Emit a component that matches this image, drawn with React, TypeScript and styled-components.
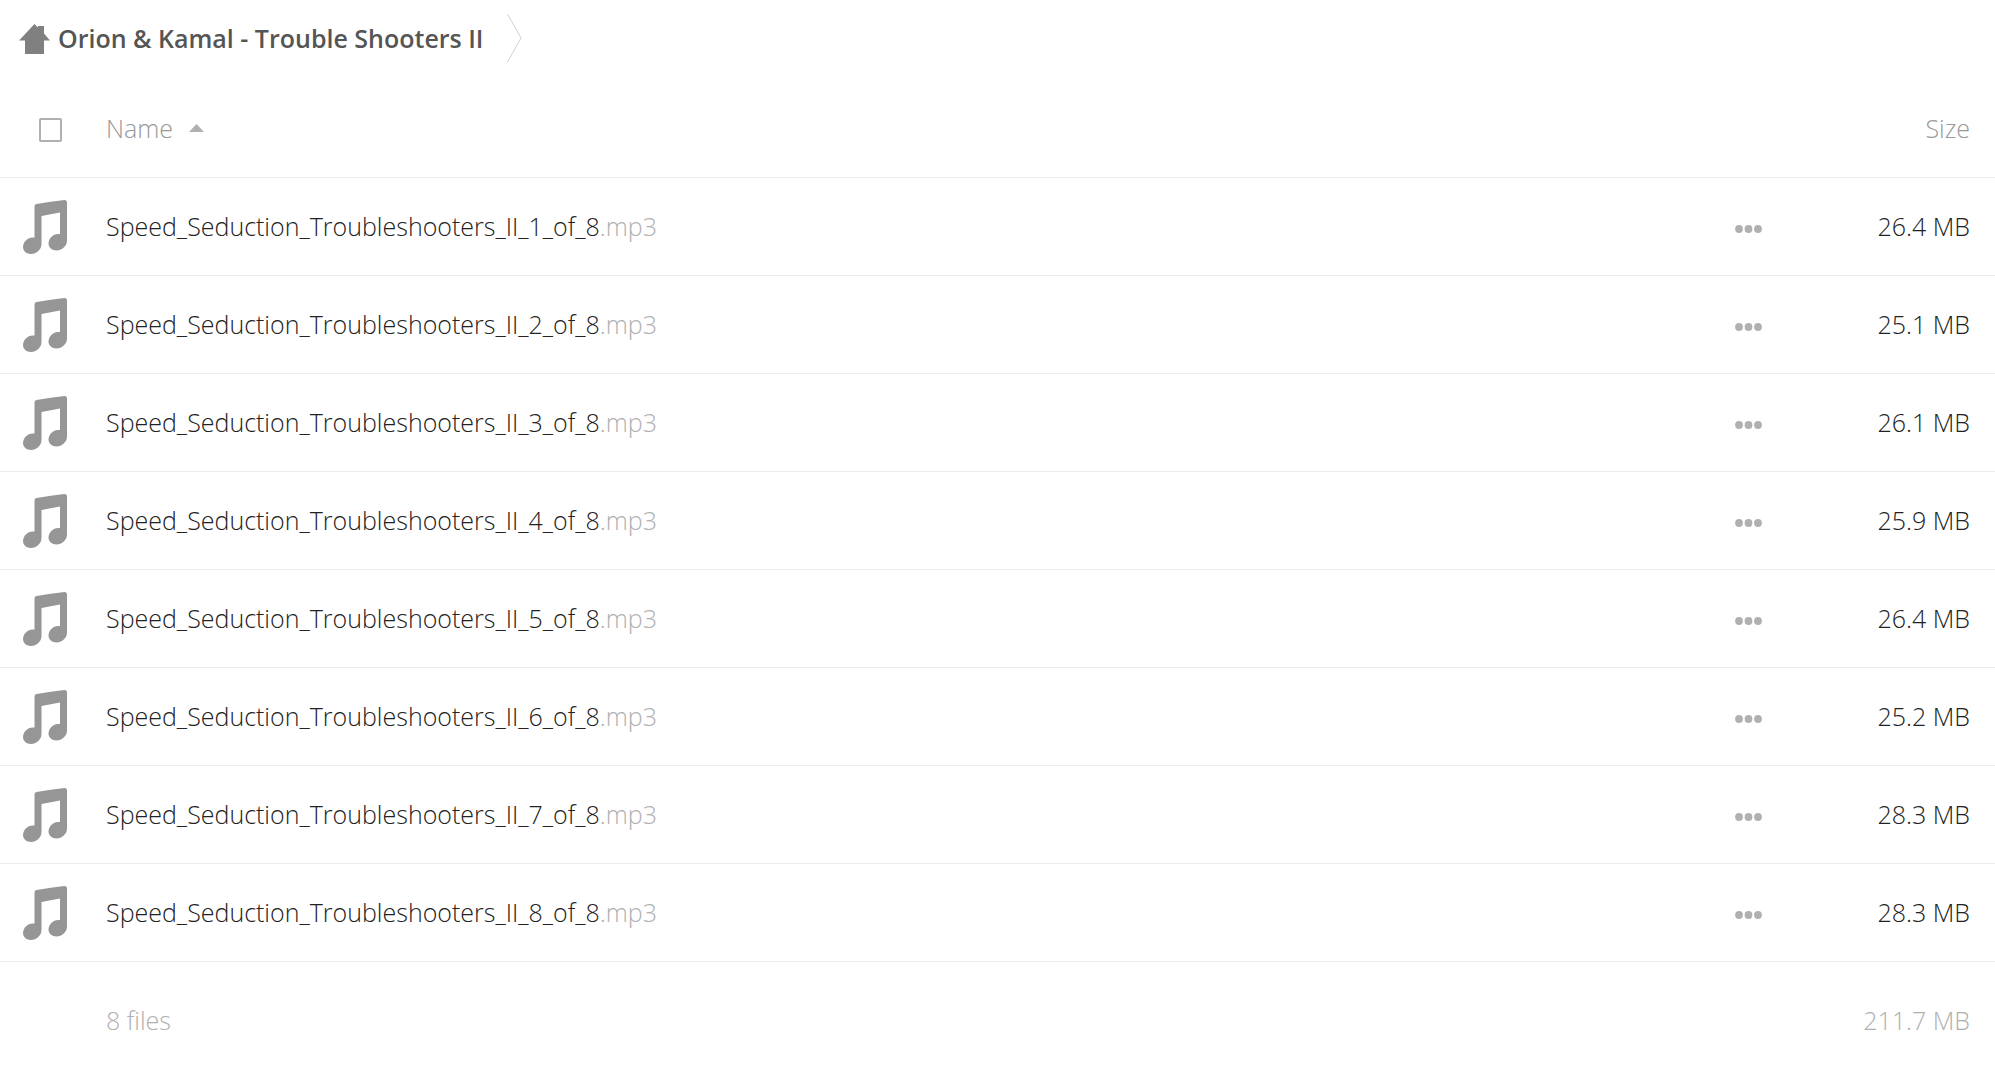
import React from "react";
import styled, { createGlobalStyle } from "styled-components";

const GlobalStyle = createGlobalStyle`
  *, *::before, *::after { box-sizing: border-box; }
  body {
    margin: 0;
    background: #fff;
    color: #222;
    font-family: "Open Sans", "Noto Sans", sans-serif;
    font-size: 25px;
    font-weight: 300;
    line-height: 36px;
  }
`;

const Breadcrumb = styled.nav`
  display: flex;
  align-items: center;
  height: 78px;
  padding: 0 0 0 19px;
`;

const CrumbLink = styled.a`
  display: flex;
  align-items: center;
  gap: 8px;
  color: #555;
  font-weight: 600;
  text-decoration: none;
`;

const CrumbTitle = styled.span`
  padding-bottom: 2px;
`;

const CrumbArrow = styled.svg`
  margin: 0 0 2px 22px;
`;

const FileTable = styled.table`
  width: 100%;
  table-layout: fixed;
  border-collapse: separate;
  border-spacing: 0;
`;

const IconColumn = styled.col`
  width: 106px;
`;

const ActionColumn = styled.col`
  width: 94px;
`;

const SizeColumn = styled.col`
  width: 186px;
`;

const HeadCell = styled.th<{ $align?: "left" | "right" }>`
  height: 100px;
  padding: 0 25px 0 0;
  border-bottom: 1px solid #ebebeb;
  color: #999;
  font-weight: 300;
  text-align: ${(p) => p.$align ?? "left"};
  vertical-align: middle;
`;

const Checkbox = styled.input`
  appearance: none;
  display: block;
  width: 23px;
  height: 24px;
  margin: 4px 0 0 39px;
  border: 2px solid #b0b0b0;
  border-radius: 2px;
  background: #fff;

  &:checked {
    background: #b0b0b0;
  }
`;

const SortButton = styled.button`
  display: inline-flex;
  align-items: center;
  gap: 16px;
  padding: 0;
  border: 0;
  background: none;
  color: inherit;
  font: inherit;
  cursor: pointer;
`;

const Cell = styled.td<{ $align?: "left" | "right" }>`
  height: 98px;
  padding: 0 25px 2px 0;
  border-bottom: 1px solid #ebebeb;
  text-align: ${(p) => p.$align ?? "left"};
  vertical-align: middle;
  white-space: nowrap;
`;

const IconCell = styled(Cell)`
  padding: 0 0 0 23px;
`;

const ActionCell = styled(Cell)`
  padding: 4px 0 0;
`;

const FileLink = styled.a`
  color: inherit;
  text-decoration: none;
`;

const Extension = styled.span`
  color: #b0b0b0;
`;

const MenuButton = styled.button`
  display: flex;
  padding: 10px 20px;
  border: 0;
  background: none;
  cursor: pointer;
`;

const Block = styled.svg`
  display: block;
`;

const SummaryCell = styled.td<{ $align?: "left" | "right" }>`
  height: 107px;
  padding: 8px 25px 0 0;
  color: #b0b0b0;
  text-align: ${(p) => p.$align ?? "left"};
  vertical-align: middle;
`;

const HomeIcon = () => (
  <Block width="31" height="30" viewBox="0 0 31 30" fill="#808080" aria-hidden="true">
    <path d="M15.500 0 19 3.500V2h6v7.500l6 7h-6V30H6V16.500H0z" />
  </Block>
);

const MusicIcon = () => (
  <Block width="44" height="54" viewBox="0 0 44 54" fill="#969696" aria-hidden="true">
    <path d="M13.500 4Q28 1.600 41.500 0 44 0 44 2.500V40.500C44 46 39 50.500 33.500 50.500 29 50.500 25.500 47.600 25.500 43.500 25.500 38.500 30 34 35 34H37V12.500L18.500 16V44C18.500 49.500 13.500 54 8 54 3.500 54 0 51.200 0 47 0 42 4.500 37.500 9.500 37.500H11.500V6.500Q11.500 4.300 13.500 4z" />
  </Block>
);

const DotsIcon = () => (
  <Block width="27" height="8" viewBox="0 0 27 8" fill="#b0b0b0" aria-hidden="true">
    <circle cx="4" cy="4" r="3.900" />
    <circle cx="13.500" cy="4" r="3.900" />
    <circle cx="23" cy="4" r="3.900" />
  </Block>
);

const sizes = ["26.4 MB", "25.1 MB", "26.1 MB", "25.9 MB", "26.4 MB", "25.2 MB", "28.3 MB", "28.3 MB"];

export default function App() {
  return (
    <>
      <GlobalStyle />
      <Breadcrumb aria-label="Folder path">
        <CrumbLink href="#">
          <HomeIcon />
          <CrumbTitle>Orion &amp; Kamal - Trouble Shooters II</CrumbTitle>
        </CrumbLink>
        <CrumbArrow width="16" height="50" viewBox="0 0 16 50" fill="none" stroke="#d0d0d0" aria-hidden="true">
          <path d="M1.500 1 15 25 1.500 49" />
        </CrumbArrow>
      </Breadcrumb>
      <FileTable>
        <colgroup>
          <IconColumn />
          <col />
          <ActionColumn />
          <SizeColumn />
        </colgroup>
        <thead>
          <tr>
            <HeadCell>
              <Checkbox type="checkbox" aria-label="Select all files" />
            </HeadCell>
            <HeadCell>
              <SortButton type="button">
                Name
                <Block width="15" height="8" viewBox="0 0 15 8" fill="#b0b0b0" aria-hidden="true">
                  <path d="M7.500 0 15 8H0z" />
                </Block>
              </SortButton>
            </HeadCell>
            <HeadCell />
            <HeadCell $align="right">Size</HeadCell>
          </tr>
        </thead>
        <tbody>
          {sizes.map((size, i) => {
            const name = `Speed_Seduction_Troubleshooters_II_${i + 1}_of_8`;
            return (
              <tr key={name}>
                <IconCell>
                  <MusicIcon />
                </IconCell>
                <Cell>
                  <FileLink href="#">
                    {name}
                    <Extension>.mp3</Extension>
                  </FileLink>
                </Cell>
                <ActionCell>
                  <MenuButton type="button" aria-label={`Actions for ${name}.mp3`}>
                    <DotsIcon />
                  </MenuButton>
                </ActionCell>
                <Cell $align="right">{size}</Cell>
              </tr>
            );
          })}
        </tbody>
        <tfoot>
          <tr>
            <SummaryCell />
            <SummaryCell>8 files</SummaryCell>
            <SummaryCell />
            <SummaryCell $align="right">211.7 MB</SummaryCell>
          </tr>
        </tfoot>
      </FileTable>
    </>
  );
}
